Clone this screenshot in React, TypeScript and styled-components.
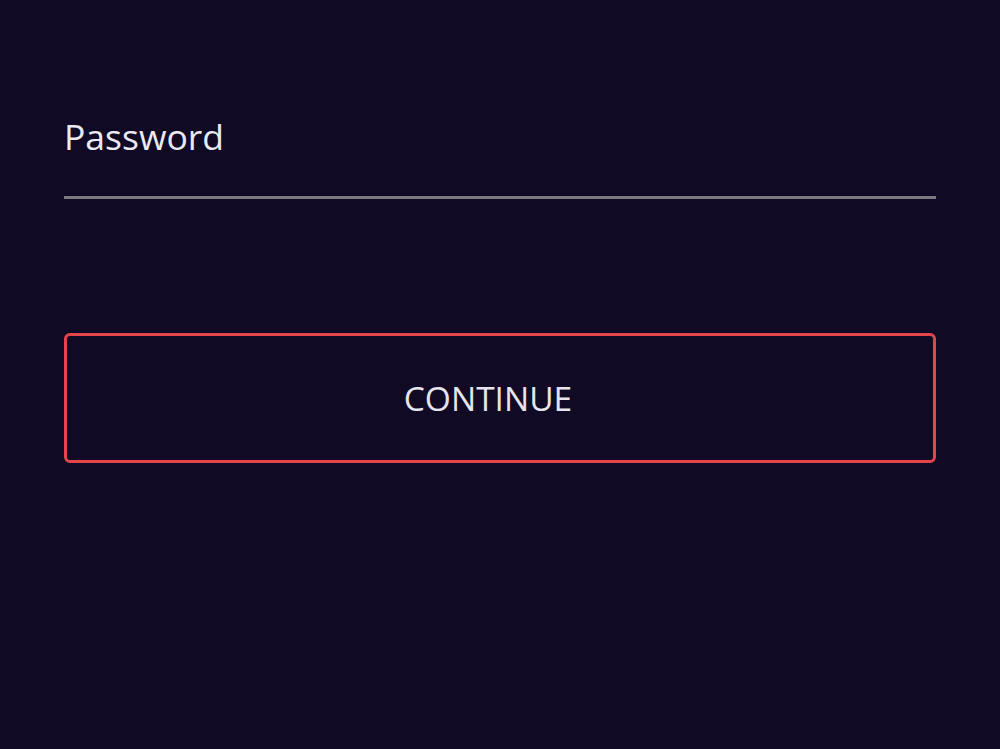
import styled, { createGlobalStyle } from "styled-components";

const GlobalStyle = createGlobalStyle`
  html, body {
    margin: 0;
    height: 100%;
    background-color: #100a24;
  }
  body {
    font-family: "Open Sans", "Noto Sans", Arial, sans-serif;
    color: #e9e7ef;
  }
`;

const Page = styled.div`
  min-height: 749px;
  box-sizing: border-box;
  padding: 112px 64px 0;
  background-color: #100a24;
`;

const Form = styled.form`
  display: flex;
  flex-direction: column;
  width: 872px;
`;

const Label = styled.label`
  font-size: 35.5px;
  line-height: 48px;
  color: #ebe9f1;
`;

const Input = styled.input`
  height: 39px;
  box-sizing: border-box;
  background: transparent;
  border: none;
  border-bottom: 3px solid #7b7882;
  outline: none;
  color: #ebe9f1;
  font-family: inherit;
  font-size: 30px;
  padding: 0;
`;

const Button = styled.button`
  margin-top: 134px;
  height: 130px;
  box-sizing: border-box;
  padding: 0 24px 0 0;
  background: transparent;
  border: 3px solid #e2464b;
  border-radius: 6px;
  color: #e6e4ec;
  font-family: "Open Sans", "Noto Sans", Arial, sans-serif;
  font-size: 33.5px;
  cursor: pointer;
`;

export default function App() {
  return (
    <>
      <GlobalStyle />
      <Page>
        <Form onSubmit={(e) => e.preventDefault()}>
          <Label htmlFor="password">Password</Label>
          <Input id="password" type="password" />
          <Button type="submit">CONTINUE</Button>
        </Form>
      </Page>
    </>
  );
}
